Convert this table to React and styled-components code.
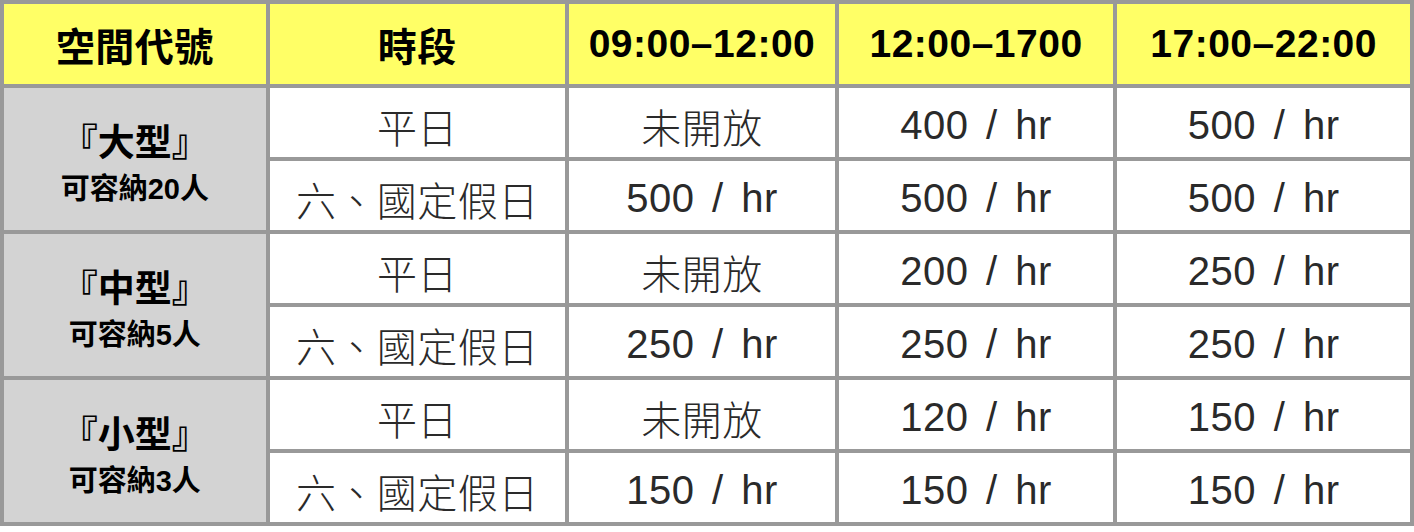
import React from "react";
import styled, { createGlobalStyle } from "styled-components";

const GlobalStyle = createGlobalStyle`
  html, body {
    margin: 0;
    padding: 0;
    background: #ffffff;
  }
  body {
    font-family: "Liberation Sans", "Noto Sans CJK TC", sans-serif;
  }
`;

const rooms = [
  {
    name: "『大型』",
    capacity: "可容納20人",
    weekday: ["未開放", "400 / hr", "500 / hr"],
    holiday: ["500 / hr", "500 / hr", "500 / hr"],
  },
  {
    name: "『中型』",
    capacity: "可容納5人",
    weekday: ["未開放", "200 / hr", "250 / hr"],
    holiday: ["250 / hr", "250 / hr", "250 / hr"],
  },
  {
    name: "『小型』",
    capacity: "可容納3人",
    weekday: ["未開放", "120 / hr", "150 / hr"],
    holiday: ["150 / hr", "150 / hr", "150 / hr"],
  },
];

const headers = ["空間代號", "時段", "09:00–12:00", "12:00–1700", "17:00–22:00"];
const colWidths = [261, 295, 265, 274, 292];

export default function App() {
  return (
    <>
      <GlobalStyle />
      <PriceTable>
        <colgroup>
          {colWidths.map((w, i) => (
            <col key={i} style={{ width: w }} />
          ))}
        </colgroup>
        <thead>
          <tr>
            {headers.map((h) => (
              <HeadCell key={h}>{h}</HeadCell>
            ))}
          </tr>
        </thead>
        <tbody>
          {rooms.map((room) => (
            <React.Fragment key={room.name}>
              <BodyRow>
                <RoomCell rowSpan={2}>
                  <RoomName>{room.name}</RoomName>
                  <Capacity>{room.capacity}</Capacity>
                </RoomCell>
                <Cell>平日</Cell>
                {room.weekday.map((v, i) => (
                  <Cell key={i}>{v}</Cell>
                ))}
              </BodyRow>
              <BodyRow>
                <Cell>六、國定假日</Cell>
                {room.holiday.map((v, i) => (
                  <Cell key={i}>{v}</Cell>
                ))}
              </BodyRow>
            </React.Fragment>
          ))}
        </tbody>
      </PriceTable>
    </>
  );
}

const PriceTable = styled.table`
  width: 1414px;
  table-layout: fixed;
  border-collapse: separate;
  border-spacing: 4.6px;
  background-color: #999999;
`;

const HeadCell = styled.th`
  height: 80px;
  padding: 0;
  background-color: #ffff66;
  color: #000000;
  font-size: 39px;
  font-weight: 700;
  letter-spacing: 0.5px;
  text-align: center;
  vertical-align: middle;
  white-space: nowrap;
`;

const BodyRow = styled.tr`
  height: 69px;
`;

const Cell = styled.td`
  padding: 6px 0 0 0;
  background-color: #ffffff;
  color: #2a2a2a;
  font-size: 40px;
  font-weight: 300;
  letter-spacing: 0.5px;
  word-spacing: 6px;
  text-align: center;
  vertical-align: middle;
  white-space: nowrap;
`;

const RoomCell = styled.td`
  padding: 14px 0 0 0;
  background-color: #d3d3d3;
  color: #000000;
  text-align: center;
  vertical-align: middle;
  font-weight: 700;
`;

const RoomName = styled.div`
  font-size: 37px;
  line-height: 46px;
`;

const Capacity = styled.div`
  font-size: 29px;
  line-height: 44px;
`;
